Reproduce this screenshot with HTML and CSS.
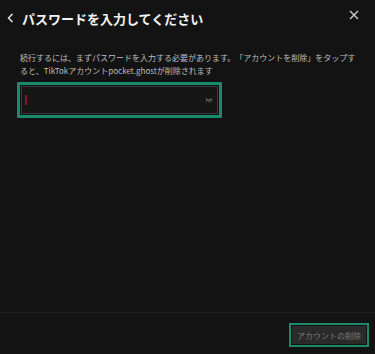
FILE: index.html
```html
<!DOCTYPE html>
<html lang="ja">
<head>
<meta charset="utf-8">
<link rel="stylesheet" href="styles.css">
</head>
<body>
<div class="dialog">
  <header class="header">
    <svg class="back" width="7" height="10" viewBox="0 0 7 10"><path d="M5.5 1 L1.5 5 L5.5 9" fill="none" stroke="#e6e6e6" stroke-width="1.5"/></svg>
    <h1 class="title">パスワードを入力してください</h1>
    <svg class="close" width="10" height="10" viewBox="0 0 10 10"><path d="M1 1 L9 9 M9 1 L1 9" fill="none" stroke="#cfcfcf" stroke-width="1.3"/></svg>
  </header>
  <p class="desc">続行するには、まずパスワードを入力する必要があります。「アカウントを削除」をタップすると、TikTokアカウントpocket.ghostが削除されます</p>
  <div class="field-ring">
    <div class="field">
      <span class="cursor"></span>
      <svg class="eye" width="8" height="5" viewBox="0 0 8 5"><path d="M0.8 0.8 Q4 3.6 7.2 0.8 M2 2.2 L1.3 3.6 M4 2.9 L4 4.4 M6 2.2 L6.7 3.6" fill="none" stroke="#8a8a8a" stroke-width="0.9"/></svg>
    </div>
  </div>
  <div class="spacer"></div>
  <footer class="footer">
    <div class="btn-ring"><button class="btn">アカウントの削除</button></div>
  </footer>
</div>
</body>
</html>
```
FILE: styles.css
```css
html, body {
  margin: 0;
  padding: 0;
  background: #131313;
}
body {
  font-family: "Noto Sans CJK JP", "Noto Sans", sans-serif;
  text-spacing-trim: space-all;
}
.dialog {
  height: 354px;
  display: flex;
  flex-direction: column;
}
.header {
  height: 33px;
  display: flex;
  align-items: center;
  padding: 0 16px 0 7px;
  box-sizing: border-box;
}
.back {
  margin-top: 2px;
  display: block;
}
.title {
  margin: 3px 0 0 8px;
  font-size: 13px;
  font-weight: 700;
  color: #f2f2f2;
  line-height: 1;
  flex: 1;
}
.close {
  display: block;
  margin-bottom: 3px;
}
.desc {
  margin: 18px 16px 0 20px;
  font-size: 8px;
  line-height: 13px;
  color: #bdbdbd;
  text-spacing-trim: space-all;
}
.field-ring {
  margin: 5px 0 0 17px;
  width: 205px;
  height: 36px;
  box-sizing: border-box;
  border: 3px solid #1b8a6c;
  padding: 1px;
}
.field {
  height: 100%;
  box-sizing: border-box;
  border: 1px solid #3a3a3a;
  background: #161616;
  display: flex;
  align-items: center;
  padding: 0 4px 0 3px;
  justify-content: space-between;
}
.cursor {
  width: 2px;
  height: 10px;
  background: #7d1a35;
}
.eye {
  display: block;
}
.spacer {
  flex: 1;
}
.footer {
  border-top: 1px solid #1f1f1f;
  height: 42px;
  box-sizing: border-box;
  padding: 10px 6px 7px 0;
  display: flex;
  justify-content: flex-end;
}
.btn-ring {
  width: 80px;
  height: 24px;
  box-sizing: border-box;
  border: 2px solid #1b8a6c;
  padding: 1px;
}
.btn {
  width: 100%;
  height: 100%;
  border: none;
  background: #2a2a2a;
  color: #7a7a7a;
  font-family: "Noto Sans CJK JP", sans-serif;
  font-size: 8px;
  padding: 0;
  display: block;
}
```
